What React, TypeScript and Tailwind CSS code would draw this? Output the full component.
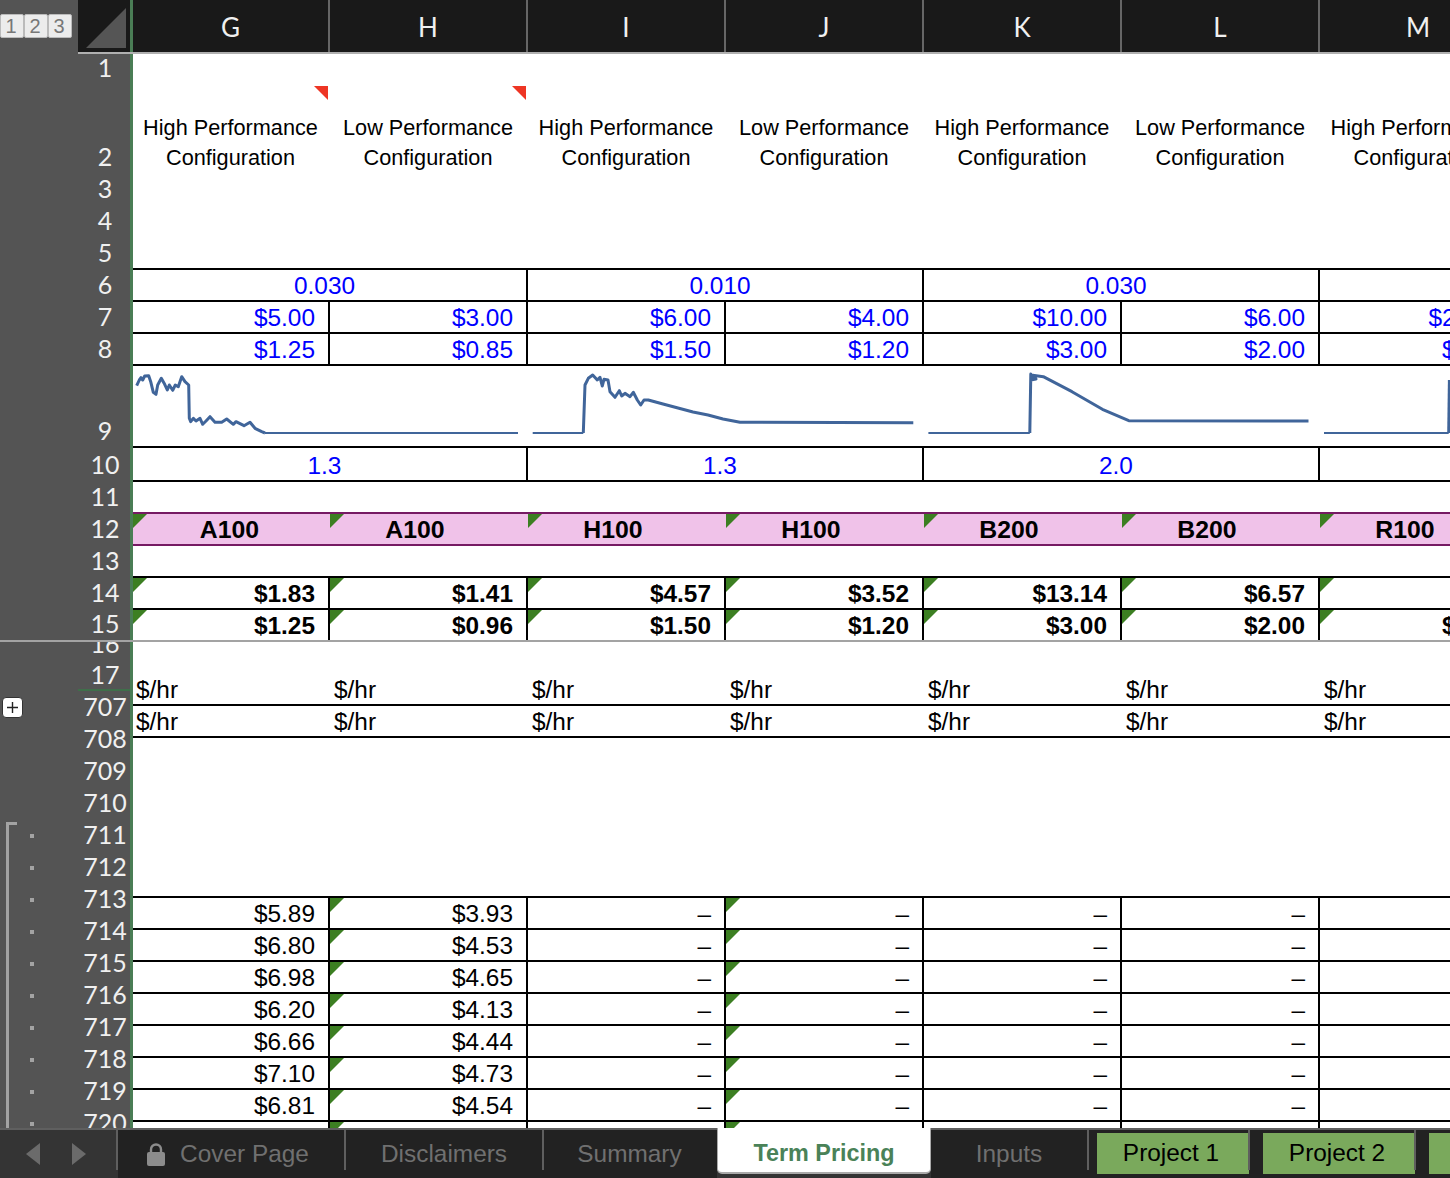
import React from "react";

const grid = "grid grid-cols-[197px_repeat(6,198px)] grid-rows-1 w-max";
const line = "border-r-2 border-black";

function Mark() {
  return <span className="absolute left-0 top-0 w-[14px] h-[14px] bg-[#3c7f22] [clip-path:polygon(0_0,100%_0,0_100%)]" />;
}
function Red() {
  return <span className="absolute right-[2px] top-[2px] w-[14px] h-[14px] bg-[#ee3524] [clip-path:polygon(0_0,100%_0,100%_100%)]" />;
}

function ValueRow({ values, marks, h, bold, blue, border = true }: { values: string[]; marks?: boolean[]; h: string; bold?: boolean; blue?: boolean; border?: boolean }) {
  return (
    <div className={`${grid} ${h} ${border ? "border-b-2 border-black" : ""}`}>
      {values.map((v, i) => (
        <div key={i} className={`relative ${line} pr-[13px] text-right leading-[31px] ${bold ? "font-bold" : ""} ${blue ? "text-[#0000ff]" : "text-black"}`}>
          {marks && marks[i] ? <Mark /> : null}
          {v}
        </div>
      ))}
    </div>
  );
}

function SpanRow({ values, h, lead }: { values: string[]; h: string; lead: string }) {
  return (
    <div className={`${grid} ${h} border-b-2 border-black text-[#0000ff]`}>
      {values.map((v, i) => (
        <div key={i} className={`${i < 3 ? "col-span-2" : "col-span-1"} ${line} pr-[10px] text-center ${lead}`}>{v}</div>
      ))}
    </div>
  );
}

const charts = [
  {
    thick: "3.7,20.7 6.3,15 8,12.7 9.7,15 11.7,11 15.7,10.7 17.7,16.7 20.3,27.3 23,29.3 24.7,20 28.3,13.3 31.7,19.3 34.3,25 36.3,20 39.7,25.3 42.3,20 45.3,21.7 48.7,11.7 52,16.7 55.7,20 56.3,53.3 57.7,56.7 60.3,53.3 63,56 67,53.3 69.7,59.3 73,56 77,51.7 82,57.3 88.7,57.3 93.7,54 100.3,59.3 103,56.7 111,60.7 117,57.3 122,63.3 128.7,66.7 132,68",
    thin: "132,68 385,68",
  },
  {
    thin: "4.7,68 55.3,68",
    thick: "55.3,68 57,20 60.3,13.3 64.7,10 69.3,15 72,12.3 74.3,21 76,14.3 80,15 82,26.7 87,32.3 91.3,25.7 93.7,31 97,28.3 102,31.7 105.3,27.3 109.3,35 112.7,40 116,35 120.3,35 135,39 150,43 165,47 180,50 195,54 212,57.3 385.3,57.7",
  },
  {
    thin: "4.4,68 105.8,68",
    thick: "105.8,68 106.8,9 106.8,15 112,14 107,10 119.3,11.7 148,26.7 178.4,44.3 204.8,55.7 384.5,56",
  },
  {
    thin: "4,68 128.7,68",
    thick: "128.7,68 129.4,15",
  },
];

function Spark({ thick, thin, last }: { thick: string; thin: string; last?: boolean }) {
  return (
    <div className={last ? "col-span-1" : "col-span-2"}>
      <svg width="396" height="80" viewBox="0 1 396 80" fill="none" className="block blur-[0.4px]">
        <polyline points={thin} stroke="#40659a" strokeWidth="1.8" strokeLinejoin="round" />
        <polyline points={thick} stroke="#40659a" strokeWidth="3" strokeLinejoin="round" />
      </svg>
    </div>
  );
}

const headerCols = ["G", "H", "I", "J", "K", "L", "M"];
const configs = ["High Performance", "Low Performance", "High Performance", "Low Performance", "High Performance", "Low Performance", "High Performance"];
const parts = ["A100", "A100", "H100", "H100", "B200", "B200", "R100"];
const allMarks = [true, true, true, true, true, true, true];
const hMarks = [false, true, false, true, false, false, false];
const dataRows = [
  ["$5.89", "$3.93"],
  ["$6.80", "$4.53"],
  ["$6.98", "$4.65"],
  ["$6.20", "$4.13"],
  ["$6.66", "$4.44"],
  ["$7.10", "$4.73"],
  ["$6.81", "$4.54"],
];

const topLabels: [string, string][] = [
  ["1", "h-[30px]"],
  ["2", "h-[89px]"],
  ["3", "h-[32px]"],
  ["4", "h-[32px]"],
  ["5", "h-[32px]"],
  ["6", "h-[32px]"],
  ["7", "h-[32px]"],
  ["8", "h-[32px]"],
  ["9", "h-[82px]"],
  ["10", "h-[34px]"],
  ["11", "h-[32px]"],
  ["12", "h-[32px]"],
  ["13", "h-[32px]"],
  ["14", "h-[32px]"],
  ["15", "h-[31px]"],
];

const lowerNums = ["707", "708", "709", "710", "711", "712", "713", "714", "715", "716", "717", "718", "719", "720"];

function Label({ n, h }: { n: string; h: string }) {
  return (
    <div className={`${h} flex items-end justify-center overflow-hidden pl-[2px]`}>
      <span className="block leading-[25px] mb-[4px] text-[25px] text-[#f0f0f0] shrink-0">{n}</span>
    </div>
  );
}

function Tab({ label, w, lock, shift }: { label: string; w: string; lock?: boolean; shift?: string }) {
  return (
    <div className={`${w} shrink-0 border-t-2 border-[#5f5f5f] h-full relative flex items-center justify-center gap-[15px] text-[#707070] ${shift ?? ""}`}>
      {lock ? (
        <svg width="18" height="23" viewBox="0 0 18 23" fill="none" className="shrink-0">
          <path d="M4 10V6.5a5 5 0 0 1 10 0V10" stroke="#8c8c8c" strokeWidth="2.4" />
          <rect x="0" y="9" width="18" height="14" rx="2" fill="#8c8c8c" />
        </svg>
      ) : null}
      {label}
      <span className="absolute right-0 top-0 w-[2px] h-[40px] bg-[#5f5f5f]" />
    </div>
  );
}

function Project({ label }: { label: string }) {
  return (
    <div className="w-[166px] shrink-0 h-full border-t-2 border-[#5f5f5f] pl-[8px] relative">
      <div className="w-[152px] mt-[3px] h-[41px] bg-[#7aa95c] text-black flex items-center justify-center pr-[4px]">{label}</div>
      <span className="absolute right-[5px] top-0 w-[2px] h-[40px] bg-[#5f5f5f]" />
    </div>
  );
}

export default function App() {
  return (
    <div className="w-[1450px] h-[1178px] overflow-hidden flex flex-col bg-[#545454] font-['Liberation_Sans',sans-serif] text-[24.4px]">
      {/* column header */}
      <div className="h-[54px] flex shrink-0">
        <div className="w-[78px] shrink-0 flex gap-0 pt-[14px]">
          {["1", "2", "3"].map((n) => (
            <div key={n} className="w-[24px] h-[24px] bg-[#ececec] border border-[#bbb] rounded-[2px] text-[#777] text-[20px] leading-[23px] text-center pr-[2px]">{n}</div>
          ))}
        </div>
        <div className="flex-1 flex flex-col min-w-0">
          <div className="h-[52px] bg-[#191919] flex overflow-hidden font-['Lato',sans-serif]">
            <div className="w-[52px] shrink-0">
              <svg width="52" height="52" viewBox="0 0 52 52"><polygon points="8,48 48,8 48,48" fill="#555" /></svg>
            </div>
            <div className="w-[3px] shrink-0 bg-[#4a7d55]" />
            <div className={grid}>
              {headerCols.map((c) => (
                <div key={c} className="border-r-2 border-[#666] text-[#f0f0f0] text-[26px] text-center leading-[55px]">{c}</div>
              ))}
            </div>
          </div>
          <div className="h-[2px] bg-[#b0b0b0]" />
        </div>
      </div>

      {/* frozen rows */}
      <div className="flex h-[586px] shrink-0">
        <div className="w-[78px] shrink-0" />
        <div className="w-[52px] shrink-0 font-['Lato',sans-serif]">
          {topLabels.map(([n, h]) => <Label key={n} n={n} h={h} />)}
        </div>
        <div className="w-[3px] shrink-0 bg-[#4a7d55]" />
        <div className="flex-1 min-w-0 overflow-hidden bg-white text-black">
          <div className="h-[30px]" />
          <div className={`${grid} h-[89px] text-[21.7px] leading-[30px]`}>
            {configs.map((c, i) => (
              <div key={i} className="relative text-center whitespace-nowrap pt-[29px] pr-[2px]">
                {i < 2 ? <Red /> : null}
                {c}
                <br />
                Configuration
              </div>
            ))}
          </div>
          <div className="h-[32px]" />
          <div className="h-[32px]" />
          <div className="h-[33px] border-b-2 border-black" />
          <SpanRow h="h-[32px]" lead="leading-[32px]" values={["0.030", "0.010", "0.030", ""]} />
          <ValueRow h="h-[32px]" blue values={["$5.00", "$3.00", "$6.00", "$4.00", "$10.00", "$6.00", "$20.00"]} />
          <ValueRow h="h-[32px]" blue values={["$1.25", "$0.85", "$1.50", "$1.20", "$3.00", "$2.00", "$5.00"]} />
          <div className={`${grid} h-[82px] border-b-2 border-black`}>
            {charts.map((c, i) => <Spark key={i} thick={c.thick} thin={c.thin} last={i === 3} />)}
          </div>
          <SpanRow h="h-[34px]" lead="leading-[35px]" values={["1.3", "1.3", "2.0", ""]} />
          <div className="h-[30px]" />
          <div className={`${grid} h-[34px] border-y-2 border-[#761a63] bg-[#f0c2e9] font-bold text-[24.8px]`}>
            {parts.map((p, i) => (
              <div key={i} className={`relative text-center leading-[32px] ${i === 0 ? "pr-[4px]" : "pr-[28px]"}`}>
                <Mark />
                {p}
              </div>
            ))}
          </div>
          <div className="h-[32px] border-b-2 border-black" />
          <ValueRow h="h-[32px]" bold marks={allMarks} values={["$1.83", "$1.41", "$4.57", "$3.52", "$13.14", "$6.57", ""]} />
          <ValueRow h="h-[30px]" bold border={false} marks={allMarks} values={["$1.25", "$0.96", "$1.50", "$1.20", "$3.00", "$2.00", "$5.00"]} />
        </div>
      </div>

      <div className="h-[2px] shrink-0 bg-[#a3a3a3]" />

      {/* scrolled rows */}
      <div className="flex h-[486px] shrink-0 overflow-hidden">
        <div className="w-[78px] shrink-0 relative">
          <span className="absolute left-[6px] top-[180px] w-[11px] h-[320px] border-l-[3px] border-t-[3px] border-[#a3a3a3]" />
          <div className="absolute left-[2px] top-[55px] w-[21px] h-[21px] bg-white rounded-[4px] border border-[#333] flex items-center justify-center">
            <svg width="13" height="13" viewBox="0 0 13 13"><path d="M6.5 1v11M1 6.5h11" stroke="#222" strokeWidth="1.4" /></svg>
          </div>
          {lowerNums.slice(4).map((n, i) => (
            <span key={n} className="absolute left-[30px] w-[4px] h-[4px] bg-[#a3a3a3]" style={{ top: 192 + i * 32 }} />
          ))}
        </div>
        <div className="w-[52px] shrink-0 font-['Lato',sans-serif]">
          <Label n="16" h="h-[18px]" />
          <div className="h-[31px] border-b-2 border-[#3f6f4a] flex items-end justify-center overflow-hidden pl-[2px]">
            <span className="block leading-[25px] mb-[2px] text-[25px] text-[#f0f0f0] shrink-0">17</span>
          </div>
          {lowerNums.map((n) => <Label key={n} n={n} h="h-[32px]" />)}
        </div>
        <div className="w-[3px] shrink-0 bg-[#4a7d55]" />
        <div className="flex-1 min-w-0 overflow-hidden bg-white text-black">
          <div className={`${grid} h-[64px] border-b-2 border-black items-end`}>
            {headerCols.map((c, i) => (
              <div key={c} className={`leading-[28px] ${i === 0 ? "pl-[3px]" : "pl-[4px]"}`}>$/hr</div>
            ))}
          </div>
          <div className={`${grid} h-[32px] border-b-2 border-black`}>
            {headerCols.map((c, i) => (
              <div key={c} className={`leading-[32px] ${i === 0 ? "pl-[3px]" : "pl-[4px]"}`}>$/hr</div>
            ))}
          </div>
          <div className="h-[160px] border-b-2 border-black" />
          {dataRows.map((r) => (
            <ValueRow key={r[0]} h="h-[32px]" marks={hMarks} values={[r[0], r[1], "–", "–", "–", "–", ""]} />
          ))}
          <ValueRow h="h-[32px]" marks={hMarks} values={["$6.72", "$4.48", "–", "–", "–", "–", ""]} />
        </div>
      </div>

      {/* sheet tabs */}
      <div className="h-[50px] shrink-0 flex bg-[#222] overflow-hidden">
        <div className="w-[118px] shrink-0 h-full bg-[#343434] border-t-2 border-[#5f5f5f] relative">
          <div className="h-[40px] flex items-center pl-[26px] gap-[32px] border-r-2 border-[#5f5f5f] pt-[8px]">
            <svg width="14" height="22" viewBox="0 0 14 22"><polygon points="14,0 14,22 0,11" fill="#6b6b6b" /></svg>
            <svg width="14" height="22" viewBox="0 0 14 22"><polygon points="0,0 0,22 14,11" fill="#6b6b6b" /></svg>
          </div>
        </div>
        <Tab label="Cover Page" w="w-[228px]" lock shift="pr-[8px]" />
        <Tab label="Disclaimers" w="w-[198px]" shift="pr-[2px]" />
        <div className="w-[173px] shrink-0 border-t-2 border-[#5f5f5f] h-full flex items-center justify-center text-[#707070] pr-[2px]">Summary</div>
        <div className="w-[214px] shrink-0 h-full bg-[#343434]">
          <div className="h-[46px] bg-white border-b-2 border-x border-[#aaa] border-t-0 rounded-b-[5px] text-[#4a8258] font-bold text-[23.4px] flex items-center justify-center pt-[7px]">Term Pricing</div>
        </div>
        <Tab label="Inputs" w="w-[158px]" shift="pr-[2px]" />
        <Project label="Project 1" />
        <Project label="Project 2" />
        <Project label="" />
      </div>
    </div>
  );
}
